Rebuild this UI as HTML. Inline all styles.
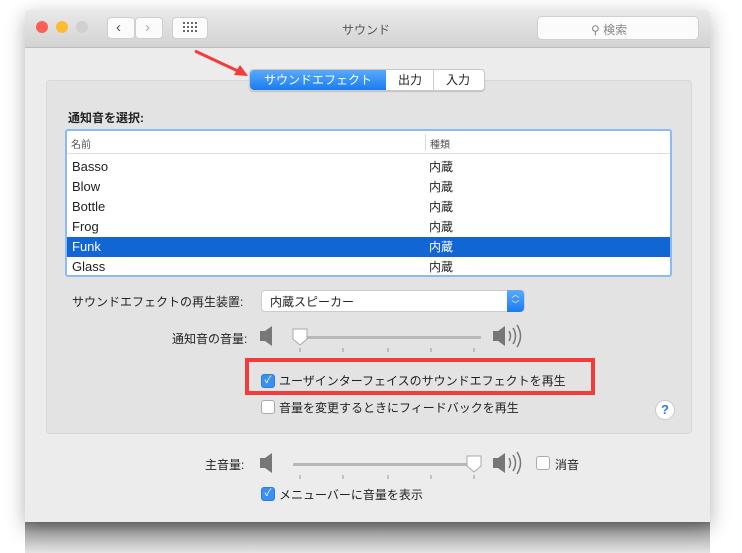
<!DOCTYPE html><html><head><meta charset="utf-8"><style>
body{margin:0;width:742px;height:553px;background:#fff;position:relative;overflow:hidden;font-family:"Liberation Sans","Noto Sans CJK JP",sans-serif;}
.a{position:absolute}
.t{font-size:12px;color:#222;white-space:nowrap}
.shadow{left:25px;top:520px;width:685px;height:33px;background:linear-gradient(#7a7a7a,#b0b0b0 40%,#e4e4e4);}
.win{left:25px;top:10px;width:685px;height:512px;background:#ececec;box-shadow:0 6px 20px rgba(0,0,0,.3);border-radius:5px 5px 0 0;overflow:hidden}
.tb{left:0;top:0;width:685px;height:37px;background:linear-gradient(#e9e9e9,#d3d3d3);border-bottom:1px solid #bdbdbd}
.btn{background:#fbfbfb;border:1px solid #cfcfcf;border-radius:4px;height:20px}
.cb{width:12px;height:12px;border-radius:3px;background:#fff;border:1px solid #aaa}
.cbon{background:#3b8ff0;border-color:#2d7de0;color:#fff;font-size:10px;line-height:12px;text-align:center}
</style></head><body>
<div class="a shadow"></div>
<div class="a win">
 <div class="a tb">
  <div class="a" style="left:11px;top:11px;width:12px;height:12px;border-radius:50%;background:#fc5f57"></div>
  <div class="a" style="left:31px;top:11px;width:12px;height:12px;border-radius:50%;background:#fdbc2e"></div>
  <div class="a" style="left:51px;top:11px;width:12px;height:12px;border-radius:50%;background:#d0d0d0"></div>
  <div class="a btn" style="left:82px;top:7px;width:26px"><span class="a t" style="left:8px;top:1px;font-size:15px;color:#555">&#x2039;</span></div>
  <div class="a btn" style="left:110px;top:7px;width:26px"><span class="a t" style="left:9px;top:1px;font-size:15px;color:#aaa">&#x203A;</span></div>
  <div class="a btn" style="left:147px;top:7px;width:34px">
   <svg class="a" style="left:10px;top:4px" width="14" height="12"><g fill="#666"><rect x="0" y="0" width="2" height="2"/><rect x="4" y="0" width="2" height="2"/><rect x="8" y="0" width="2" height="2"/><rect x="12" y="0" width="2" height="2"/><rect x="0" y="4" width="2" height="2"/><rect x="4" y="4" width="2" height="2"/><rect x="8" y="4" width="2" height="2"/><rect x="12" y="4" width="2" height="2"/><rect x="0" y="8" width="2" height="2"/><rect x="4" y="8" width="2" height="2"/><rect x="8" y="8" width="2" height="2"/><rect x="12" y="8" width="2" height="2"/></g></svg>
  </div>
  <div class="a t" style="left:317px;top:11px;color:#555">サウンド</div>
  <div class="a btn" style="left:512px;top:6px;width:160px;height:22px;border-radius:5px"><span class="a t" style="left:53px;top:4px;color:#888">⚲ 検索</span></div>
 </div>
 <div class="a" style="left:21px;top:70px;width:644px;height:352px;background:#e3e3e3;border:1px solid #d8d8d8;border-radius:4px"></div>
 <div class="a" style="left:224px;top:59px;width:234px;height:20px;background:#fff;border:1px solid #c8c8c8;border-radius:4px;box-shadow:0 1px 1px rgba(0,0,0,.15)"></div>
 <div class="a t" style="left:225px;top:60px;width:136px;height:20px;background:linear-gradient(#5aa9fb,#1a7cf0);border-radius:4px 0 0 4px;color:#fff;line-height:20px;text-align:center">サウンドエフェクト</div>
 <div class="a t" style="left:362px;top:60px;width:46px;line-height:20px;text-align:center;border-right:1px solid #ccc">出力</div>
 <div class="a t" style="left:409px;top:60px;width:48px;line-height:20px;text-align:center">入力</div>
 <div class="a t" style="left:43px;top:99px;font-weight:bold">通知音を選択:</div>
 <div class="a" style="left:40px;top:119px;width:603px;height:144px;border:2px solid #8ebaf2;border-radius:3px;background:#fff;overflow:hidden">
  <div class="a" style="left:0;top:0;width:603px;height:22px;border-bottom:1px solid #ddd"></div>
  <div class="a" style="left:358px;top:3px;width:1px;height:16px;background:#ddd"></div>
  <div class="a t" style="left:4px;top:5px;font-size:10px;color:#555">名前</div>
  <div class="a t" style="left:363px;top:5px;font-size:10px;color:#555">種類</div>
  <div class="a" style="left:0;top:106px;width:603px;height:20px;background:#1266d4"></div>
  <div class="a t" style="left:5px;top:26px;line-height:20px;font-size:13px">Basso<br>Blow<br>Bottle<br>Frog<br><span style="color:#fff">Funk</span><br>Glass</div>
  <div class="a t" style="left:362px;top:26px;line-height:20px;font-size:12px">内蔵<br>内蔵<br>内蔵<br>内蔵<br><span style="color:#fff">内蔵</span><br>内蔵</div>
 </div>
 <div class="a t" style="left:47px;top:283px">サウンドエフェクトの再生装置:</div>
 <div class="a" style="left:236px;top:280px;width:262px;height:20px;background:#fff;border:1px solid #ccc;border-radius:4px"></div>
 <div class="a t" style="left:245px;top:283px">内蔵スピーカー</div>
 <div class="a" style="left:482px;top:280px;width:17px;height:22px;background:linear-gradient(#5aa9fb,#1a7cf0);border-radius:0 4px 4px 0;color:#fff;font-size:8px;line-height:10px;text-align:center">︿<br>﹀</div>
 <div class="a t" style="left:147px;top:320px">通知音の音量:</div>
 <svg class="a" style="left:0;top:0" width="685" height="512">
  <g fill="#777">
   <path d="M235 321h5l7-5v20l-7-5h-5z"/>
   <path d="M468 321h5l7-5v20l-7-5h-5z"/>
   <path d="M235 448h5l7-5v20l-7-5h-5z"/>
   <path d="M468 448h5l7-5v20l-7-5h-5z"/>
  </g>
  <g fill="none" stroke="#777" stroke-width="1.5">
   <path d="M484 321q3 5 0 10M488 318q5 8 0 16M492 315q7 11 0 22"/>
   <path d="M484 448q3 5 0 10M488 445q5 8 0 16M492 442q7 11 0 22"/>
  </g>
  <rect x="268" y="326" width="188" height="3" fill="#b8b8b8" rx="1"/>
  <rect x="268" y="453" width="188" height="3" fill="#b8b8b8" rx="1"/>
  <g stroke="#999"><path d="M275 338v4M318 338v4M363 338v4M406 338v4M449 338v4M275 465v4M318 465v4M363 465v4M406 465v4M449 465v4"/></g>
  <path d="M268 319h14v10l-7 6-7-6z" fill="#fff" stroke="#aaa"/>
  <path d="M442 446h14v10l-7 6-7-6z" fill="#fff" stroke="#aaa"/>
 </svg>
 <div class="a" style="left:220px;top:348px;width:350px;height:37px;border:4px solid #f43a3a;box-sizing:border-box"></div>
 <div class="a cb cbon" style="left:236px;top:364px">✓</div>
 <div class="a t" style="left:254px;top:362px">ユーザインターフェイスのサウンドエフェクトを再生</div>
 <div class="a cb" style="left:236px;top:390px"></div>
 <div class="a t" style="left:254px;top:389px">音量を変更するときにフィードバックを再生</div>
 <div class="a" style="left:630px;top:390px;width:18px;height:18px;border-radius:50%;background:#fff;border:1px solid #ccc;color:#2a7be8;font-weight:bold;font-size:13px;line-height:18px;text-align:center">?</div>
 <div class="a t" style="left:180px;top:446px">主音量:</div>
 <div class="a cb" style="left:511px;top:446px"></div>
 <div class="a t" style="left:530px;top:446px">消音</div>
 <div class="a cb cbon" style="left:236px;top:477px">✓</div>
 <div class="a t" style="left:254px;top:476px">メニューバーに音量を表示</div>
</div>
<svg class="a" style="left:0;top:0" width="742" height="553"><path d="M195 51L240 72" stroke="#f43a3a" stroke-width="3"/><path d="M248 76l-14-1 6-10z" fill="#f43a3a"/></svg>
</body></html>
